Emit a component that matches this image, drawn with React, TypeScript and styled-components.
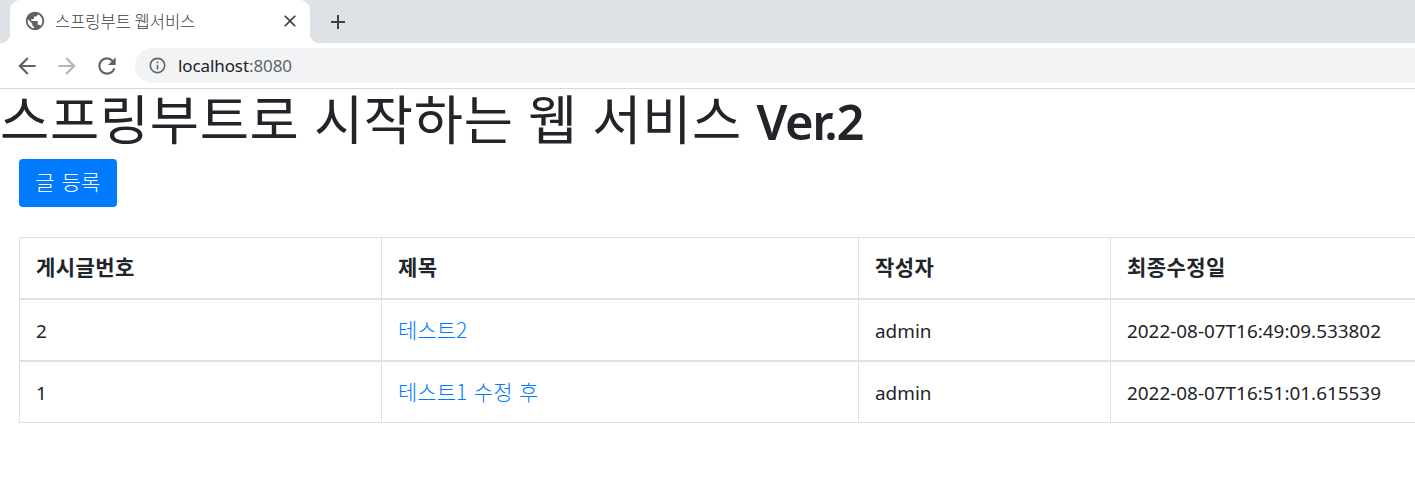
import React from 'react'
import styled, { createGlobalStyle } from 'styled-components'
import {
  MdAdd,
  MdArrowBack,
  MdArrowForward,
  MdClose,
  MdInfoOutline,
  MdPublic,
  MdRefresh,
} from 'react-icons/md'

const sans = `"Noto Sans", "Noto Sans CJK KR", sans-serif`
const korean = `"Noto Sans CJK KR", sans-serif`

const GlobalStyle = createGlobalStyle`
  html, body {
    margin: 0;
    padding: 0;
    background: #fff;
    overflow: hidden;
    font-family: ${sans};
    color: #212529;
  }
`

const TabStrip = styled.div`
  height: 43px;
  background: #dee1e6;
  display: flex;
  align-items: flex-end;
  padding-left: 10px;
`

const Tab = styled.div`
  width: 300px;
  height: 43px;
  box-sizing: border-box;
  background: #fff;
  border-radius: 10px 10px 0 0;
  display: flex;
  align-items: center;
  padding: 0 10px 2px 14px;
  position: relative;
  color: #5f6368;

  &::before,
  &::after {
    content: '';
    position: absolute;
    bottom: 0;
    width: 10px;
    height: 10px;
  }
  &::before {
    left: -10px;
    background: radial-gradient(circle at 0 0, #dee1e6 10px, #fff 10.5px);
  }
  &::after {
    right: -10px;
    background: radial-gradient(circle at 100% 0, #dee1e6 10px, #fff 10.5px);
  }
`

const TabTitle = styled.span`
  flex: 1;
  margin-left: 9px;
  font-size: 16.5px;
  font-weight: 300;
  color: #3c4043;
  font-family: ${korean};
`

const CloseIcon = styled(MdClose)`
  color: #3c4043;
`

const NewTab = styled.div`
  margin-left: 16px;
  height: 43px;
  display: flex;
  align-items: center;
  color: #3c4043;
`

const Toolbar = styled.div`
  height: 45px;
  background: #fff;
  border-bottom: 1px solid #d6d8db;
  display: flex;
  align-items: center;
  padding-left: 14px;
`

const NavButton = styled.span<{ $off?: boolean; $gap?: number }>`
  display: flex;
  margin-right: ${p => p.$gap ?? 14}px;
  color: ${p => (p.$off ? '#b4b6b9' : '#5f6368')};
`

const Omnibox = styled.div`
  flex: 1;
  height: 35px;
  background: #f1f3f4;
  border-radius: 18px 0 0 18px;
  display: flex;
  align-items: center;
  padding-left: 13px;
  color: #5f6368;
`

const Url = styled.span`
  margin-left: 11px;
  font-size: 17px;
  color: #5f6368;
  letter-spacing: -0.1px;
  b {
    font-weight: 400;
    color: #202124;
  }
`

const Title = styled.h1`
  margin: 0;
  height: 60px;
  font-family: ${korean};
  font-size: 53.5px;
  line-height: 56px;
  font-weight: 400;
  letter-spacing: 0.7px;
  word-spacing: 1.7px;
  white-space: nowrap;
  b {
    font-family: "Noto Sans", sans-serif;
    font-size: 49px;
    font-weight: 600;
    letter-spacing: -1.4px;
  }
`

const Content = styled.div`
  padding: 10px 0 0 19px;
`

const PrimaryButton = styled.a`
  display: inline-block;
  box-sizing: border-box;
  height: 48px;
  width: 98px;
  line-height: 44px;
  text-align: center;
  background: #007bff;
  color: #fff;
  border-radius: 4px;
  font-size: 21px;
  font-weight: 300;
  letter-spacing: 0.3px;
  word-spacing: 1.5px;
  font-family: ${korean};
`

const Table = styled.table`
  margin-top: 30px;
  width: 1500px;
  table-layout: fixed;
  border-collapse: collapse;
  font-size: 18.9px;

  tbody tr:first-child td {
    border-bottom-width: 2px;
  }
`

const Th = styled.th<{ $w: number }>`
  width: ${p => p.$w}px;
  box-sizing: border-box;
  height: 61px;
  padding: 0 16px 3px;
  text-align: left;
  font-family: ${korean};
  font-size: 21px;
  font-weight: 700;
  letter-spacing: 0.4px;
  border: 1px solid #dee2e6;
  border-bottom: 2px solid #dee2e6;
`

const Td = styled.td`
  height: 62px;
  box-sizing: border-box;
  padding: 2px 16px 0;
  border: 1px solid #dee2e6;
`

const RowLink = styled.a`
  color: #007bff;
  text-decoration: none;
  font-size: 21px;
  font-weight: 300;
  word-spacing: 2px;
  vertical-align: 3px;
  font-family: ${korean};
`

const posts = [
  { id: 2, title: '테스트2', author: 'admin', date: '2022-08-07T16:49:09.533802' },
  { id: 1, title: '테스트1 수정 후', author: 'admin', date: '2022-08-07T16:51:01.615539' },
]

const App: React.FC = () => (
  <>
    <GlobalStyle />
    <TabStrip>
      <Tab>
        <MdPublic size={22} />
        <TabTitle>스프링부트 웹서비스</TabTitle>
        <CloseIcon size={20} />
      </Tab>
      <NewTab>
        <MdAdd size={24} />
      </NewTab>
    </TabStrip>
    <Toolbar>
      <NavButton>
        <MdArrowBack size={26} />
      </NavButton>
      <NavButton $off>
        <MdArrowForward size={26} />
      </NavButton>
      <NavButton $gap={15}>
        <MdRefresh size={26} />
      </NavButton>
      <Omnibox>
        <MdInfoOutline size={19} />
        <Url>
          <b>localhost</b>:8080
        </Url>
      </Omnibox>
    </Toolbar>
    <Title>
      스프링부트로 시작하는 웹 서비스 <b>Ver.2</b>
    </Title>
    <Content>
      <PrimaryButton>글 등록</PrimaryButton>
      <Table>
        <thead>
          <tr>
            <Th $w={362}>게시글번호</Th>
            <Th $w={477}>제목</Th>
            <Th $w={252}>작성자</Th>
            <Th $w={409}>최종수정일</Th>
          </tr>
        </thead>
        <tbody>
          {posts.map(post => (
            <tr key={post.id}>
              <Td>{post.id}</Td>
              <Td>
                <RowLink>{post.title}</RowLink>
              </Td>
              <Td>{post.author}</Td>
              <Td>{post.date}</Td>
            </tr>
          ))}
        </tbody>
      </Table>
    </Content>
  </>
)

export default App
